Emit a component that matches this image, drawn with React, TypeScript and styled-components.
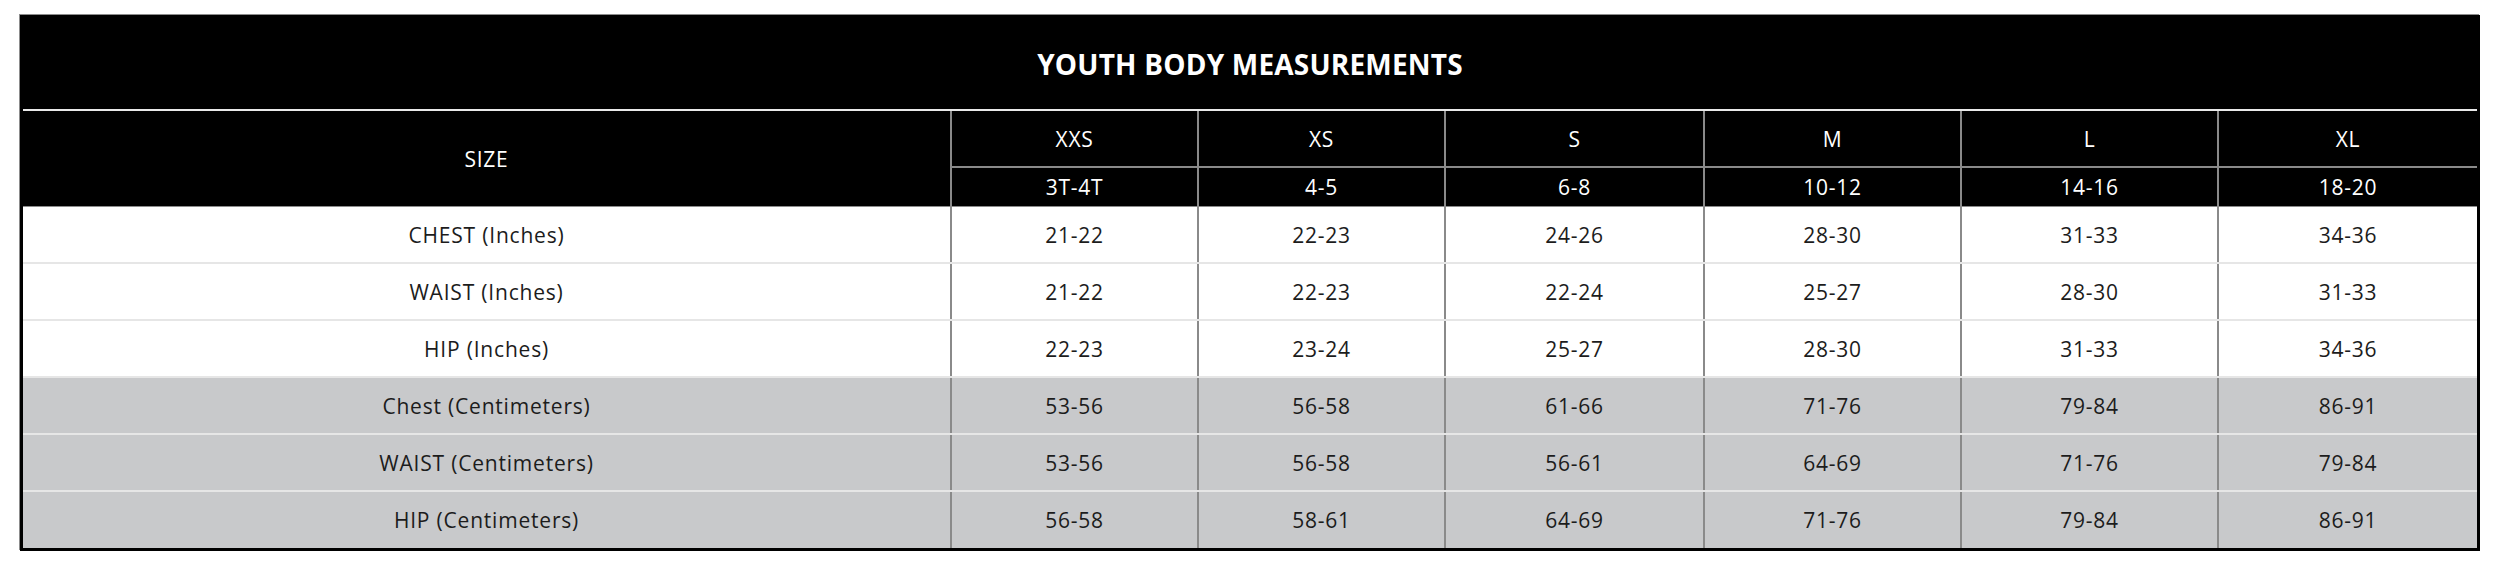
import React from "react";
import styled, { createGlobalStyle } from "styled-components";

const GlobalStyle = createGlobalStyle`
  html, body { margin: 0; padding: 0; background: #ffffff; }
  body { font-family: "Open Sans", "Liberation Sans", sans-serif; }
`;

const COLS = "927px 247px 247px 259px 257px 257px 260px";

const Page = styled.div`
  padding: 15px 0 0 20px;
`;

const Table = styled.div`
  width: 2460px;
  box-sizing: border-box;
  border: 3px solid #000;
  box-shadow: -1px -1px 0 #8c8c8c;
  display: flex;
  flex-direction: column;
`;

const Title = styled.div`
  height: 91px;
  background: #000;
  color: #fff;
  display: flex;
  align-items: center;
  justify-content: center;
  font-family: "Open Sans", "Liberation Sans", sans-serif;
  font-weight: 700;
  font-size: 28px;
  letter-spacing: 0.2px;
  border-bottom: 2px solid #e9e9e9;
`;

const Header = styled.div`
  display: grid;
  grid-template-columns: ${COLS};
  grid-template-rows: 57px 39px;
  background: #000;
  color: #fff;
`;

const SizeCell = styled.div`
  grid-row: 1 / span 2;
  display: flex;
  align-items: center;
  justify-content: center;
  font-size: 21px;
  letter-spacing: 0.7px;
  border-bottom: 1px solid #8c8c8c;
`;

const HeadCell = styled.div<{ $last?: boolean }>`
  display: flex;
  align-items: center;
  justify-content: center;
  font-size: 21px;
  letter-spacing: 0.7px;
  border-left: 2px solid #8a8a8a;
  border-bottom: ${(p) => (p.$last ? "1px" : "2px")} solid #8a8a8a;
  box-sizing: border-box;
`;

const Row = styled.div<{ $shade?: boolean; $last?: boolean }>`
  display: grid;
  grid-template-columns: ${COLS};
  height: ${(p) => (p.$last ? "56px" : "57px")};
  box-sizing: border-box;
  background: ${(p) => (p.$shade ? "#c8c9cb" : "#ffffff")};
  border-bottom: ${(p) => (p.$last ? "none" : "2px solid #e6e6e6")};
  color: #1c1c1c;
`;

const Cell = styled.div<{ $first?: boolean }>`
  display: flex;
  align-items: center;
  justify-content: center;
  font-size: 21px;
  letter-spacing: ${(p) => (p.$first ? "0.8px" : "0.7px")};
  border-left: ${(p) => (p.$first ? "none" : "2px solid #8a8a8a")};
`;

const sizes = ["XXS", "XS", "S", "M", "L", "XL"];
const ages = ["3T-4T", "4-5", "6-8", "10-12", "14-16", "18-20"];

const rows: { label: string; values: string[]; shade: boolean }[] = [
  { label: "CHEST (Inches)", values: ["21-22", "22-23", "24-26", "28-30", "31-33", "34-36"], shade: false },
  { label: "WAIST (Inches)", values: ["21-22", "22-23", "22-24", "25-27", "28-30", "31-33"], shade: false },
  { label: "HIP (Inches)", values: ["22-23", "23-24", "25-27", "28-30", "31-33", "34-36"], shade: false },
  { label: "Chest (Centimeters)", values: ["53-56", "56-58", "61-66", "71-76", "79-84", "86-91"], shade: true },
  { label: "WAIST (Centimeters)", values: ["53-56", "56-58", "56-61", "64-69", "71-76", "79-84"], shade: true },
  { label: "HIP (Centimeters)", values: ["56-58", "58-61", "64-69", "71-76", "79-84", "86-91"], shade: true },
];

export default function App() {
  return (
    <>
      <GlobalStyle />
      <Page>
        <Table>
          <Title>YOUTH BODY MEASUREMENTS</Title>
          <Header>
            <SizeCell>SIZE</SizeCell>
            {sizes.map((s) => (
              <HeadCell key={s}>{s}</HeadCell>
            ))}
            {ages.map((a) => (
              <HeadCell key={a} $last>
                {a}
              </HeadCell>
            ))}
          </Header>
          {rows.map((r, i) => (
            <Row key={r.label} $shade={r.shade} $last={i === rows.length - 1}>
              <Cell $first>{r.label}</Cell>
              {r.values.map((v, j) => (
                <Cell key={j}>{v}</Cell>
              ))}
            </Row>
          ))}
        </Table>
      </Page>
    </>
  );
}
